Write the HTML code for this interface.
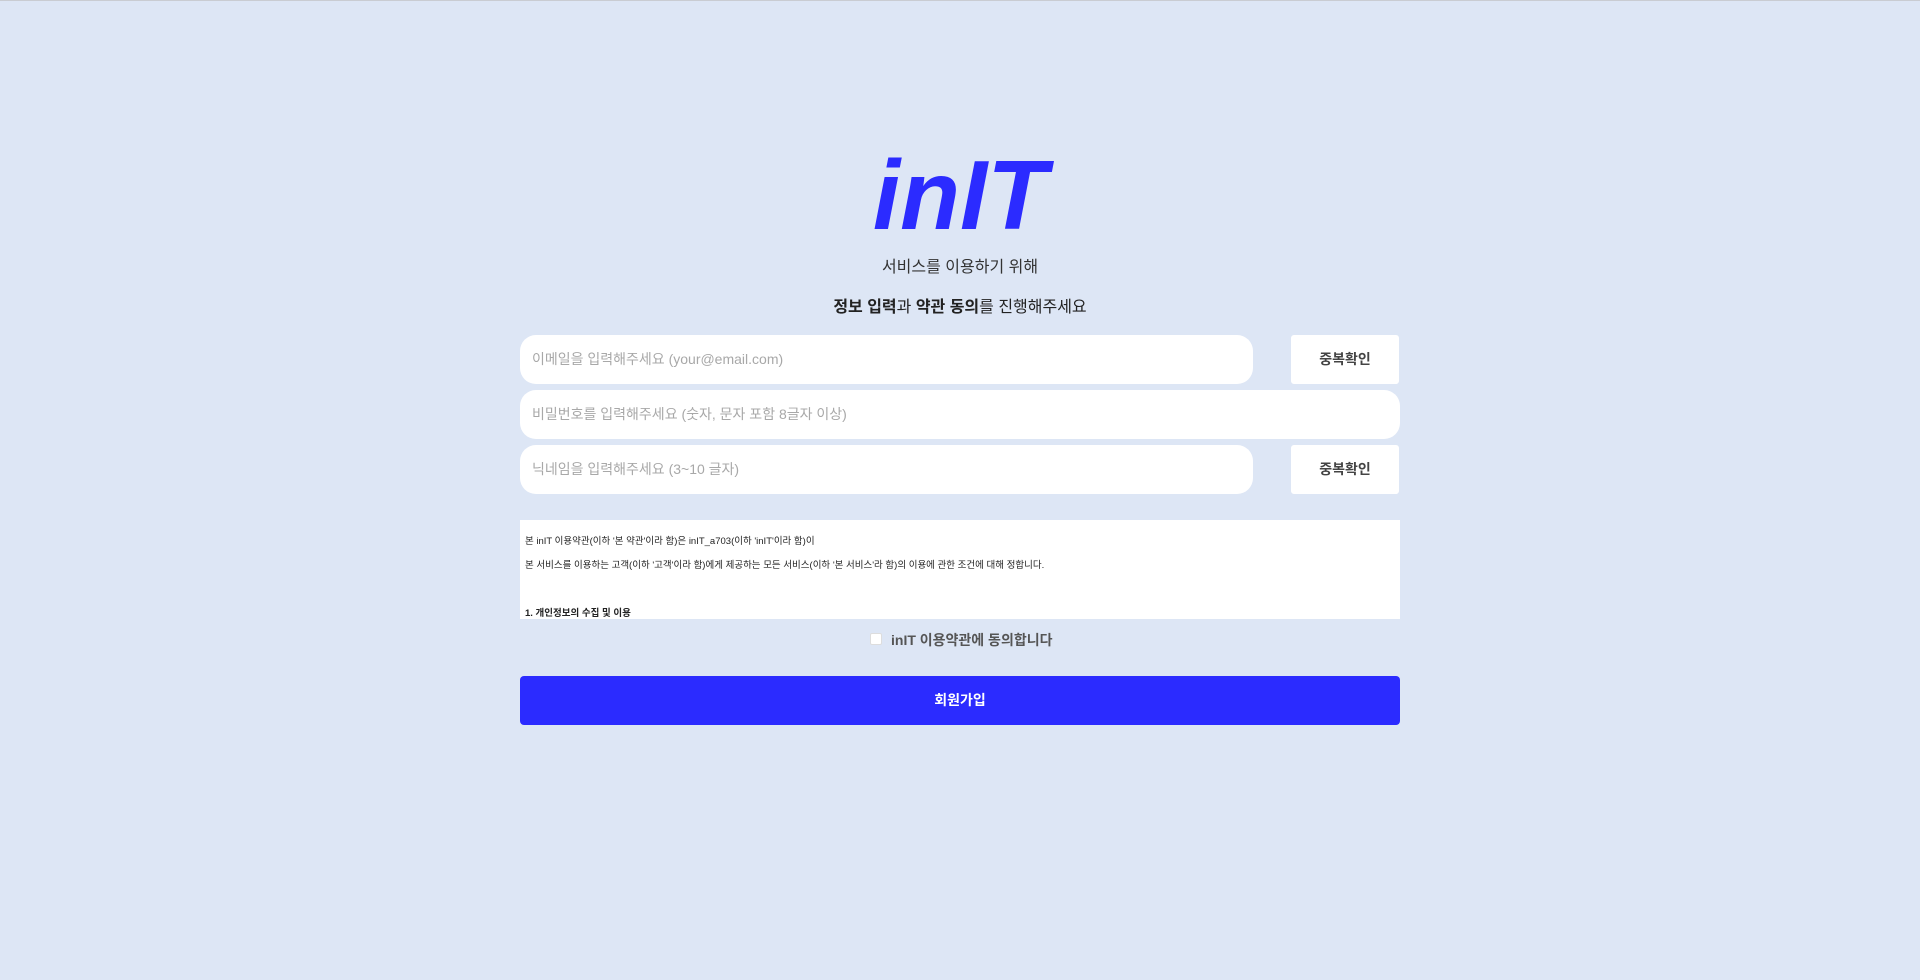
<!DOCTYPE html>
<html><head><meta charset="utf-8"><style>
*{box-sizing:border-box;margin:0;padding:0}
body{width:1920px;height:980px;background:#dde6f5;font-family:"Liberation Sans","Noto Sans CJK KR",sans-serif;position:relative;overflow:hidden;border-top:1px solid #c9ccd2}
.abs{position:absolute}
.logo{left:860px;top:145px;width:200px;text-align:center;font-size:98px;font-weight:bold;font-style:italic;color:#2b2bff;letter-spacing:0px;line-height:1}
.t1{left:0;width:1920px;text-align:center;top:252px;font-size:16px;color:#333}
.t2{left:0;width:1920px;text-align:center;top:292px;font-size:16px;color:#222}
.inp{background:#fff;border-radius:16px;height:49px;padding-left:12px;font-size:14px;color:#a8a8a8;line-height:49px}
.btn{background:#fff;border-radius:3px;left:1291px;width:108px;height:49px;text-align:center;line-height:49px;font-size:14px;font-weight:bold;color:#444}
.terms{left:520px;top:519px;width:880px;height:99px;background:#fff;font-size:9.5px;color:#222;padding-left:5px}
.terms div{position:absolute;left:5px}
</style></head><body>
<div class="abs logo">inIT</div>
<div class="abs t1">서비스를 이용하기 위해</div>
<div class="abs t2"><b>정보 입력</b>과 <b>약관 동의</b>를 진행해주세요</div>
<div class="abs inp" style="left:520px;top:334px;width:733px">이메일을 입력해주세요 (your@email.com)</div>
<div class="abs btn" style="top:334px">중복확인</div>
<div class="abs inp" style="left:520px;top:389px;width:880px">비밀번호를 입력해주세요 (숫자, 문자 포함 8글자 이상)</div>
<div class="abs inp" style="left:520px;top:444px;width:733px">닉네임을 입력해주세요 (3~10 글자)</div>
<div class="abs btn" style="top:444px">중복확인</div>
<div class="abs terms">
<div style="top:13px">본 inIT 이용약관(이하 '본 약관'이라 함)은 inIT_a703(이하 'inIT'이라 함)이</div>
<div style="top:37px">본 서비스를 이용하는 고객(이하 '고객'이라 함)에게 제공하는 모든 서비스(이하 '본 서비스'라 함)의 이용에 관한 조건에 대해 정합니다.</div>
<div style="top:85px;font-weight:bold">1. 개인정보의 수집 및 이용</div>
</div>
<div class="abs" style="left:870px;top:632px;width:12px;height:12px;background:#fff;border:1px solid #ddd;border-radius:2px"></div>
<div class="abs" style="left:891px;top:629px;font-size:14px;font-weight:bold;color:#555">inIT 이용약관에 동의합니다</div>
<div class="abs" style="left:520px;top:675px;width:880px;height:49px;background:#2b2bff;border-radius:4px;color:#fff;font-weight:bold;font-size:14px;text-align:center;line-height:49px">회원가입</div>
</body></html>
